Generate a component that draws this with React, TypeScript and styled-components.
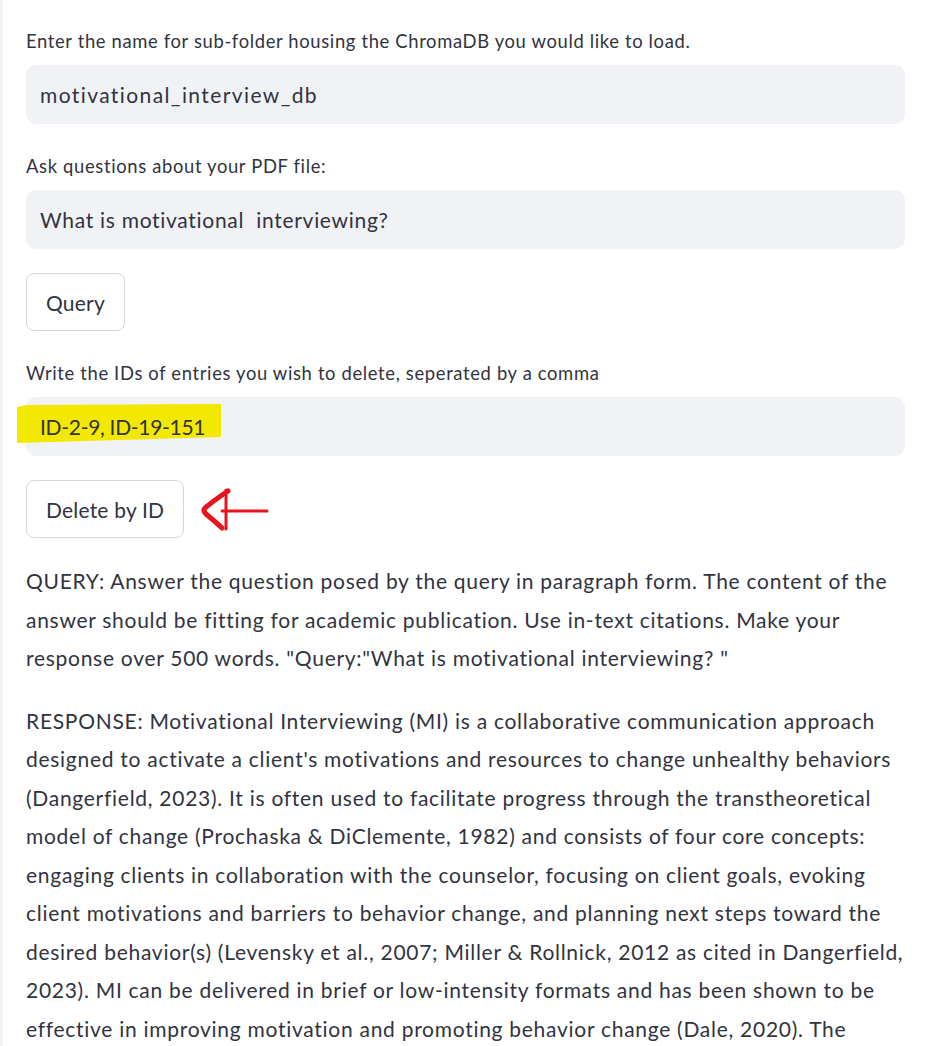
import React from "react";
import styled, { createGlobalStyle } from "styled-components";

const Global = createGlobalStyle`
  html, body { margin: 0; padding: 0; background: #ffffff; }
  body { font-family: "Lato", "Liberation Sans", sans-serif; color: #31333f; }
  * { box-sizing: border-box; }
`;

const Page = styled.div`
  display: flex;
  min-height: 1046px;
`;

const SideEdge = styled.div`
  width: 3px;
  flex: none;
  background: #f0f2f6;
`;

const Main = styled.main`
  flex: 1;
  display: flex;
  flex-direction: column;
  gap: 24px;
  padding: 23px 21px 0 23px;
`;

const Field = styled.div`
  display: flex;
  flex-direction: column;
  gap: 12px;
  padding-top: 6px;
`;

const Label = styled.label`
  font-size: 18.4px;
  line-height: 24px;
  letter-spacing: 0.65px;
  color: #31333f;
`;

const InputWrap = styled.div`
  position: relative;
  height: 59px;
  border-radius: 10px;
  background: #f0f2f6;
`;

const TextInput = styled.input<{ $spacing?: number }>`
  position: relative;
  z-index: 1;
  width: 100%;
  height: 100%;
  border: none;
  outline: none;
  background: transparent;
  padding: 0 14px;
  font-family: inherit;
  font-size: 21px;
  letter-spacing: ${(p) => p.$spacing ?? 0.6}px;
  color: #31333f;
  white-space: pre;
`;

const Highlight = styled.div`
  position: absolute;
  left: -9px;
  top: 7px;
  width: 204px;
  height: 40px;
  background: #f2e800;
  clip-path: polygon(0 3px, 10px 1px, 100% 0, 100% 33px, 0 39px);
  pointer-events: none;
`;

const ButtonRow = styled.div`
  display: flex;
  align-items: center;
  gap: 14px;
`;

const Button = styled.button`
  height: 58px;
  padding: 0 19px;
  border: 1px solid #d6d6dc;
  border-radius: 8px;
  background: #ffffff;
  font-family: inherit;
  font-size: 21px;
  letter-spacing: 0.2px;
  color: #31333f;
  cursor: pointer;
`;

const Paragraph = styled.p`
  margin: 0;
  font-size: 21px;
  line-height: 38.5px;
  letter-spacing: 0.72px;
  color: #31333f;
  white-space: nowrap;
`;

const RedArrow = () => (
  <svg width="72" height="46" viewBox="0 0 72 46" fill="none">
    <path
      d="M30 5 C24 9 14 16 7 22 C5 24 6 26 8 28 C14 33 20 38 24 42"
      stroke="#e8141c"
      strokeWidth="5"
      strokeLinecap="round"
      strokeLinejoin="round"
    />
    <path d="M28 4 L28 43" stroke="#e8141c" strokeWidth="3" strokeLinecap="round" />
    <path d="M24 25 L69 25" stroke="#e8141c" strokeWidth="3" strokeLinecap="round" />
  </svg>
);

const p1 = [
  "QUERY: Answer the question posed by the query in paragraph form. The content of the",
  "answer should be fitting for academic publication. Use in-text citations. Make your",
  'response over 500 words. "Query:"What is motivational interviewing? "',
];

const p2 = [
  "RESPONSE: Motivational Interviewing (MI) is a collaborative communication approach",
  "designed to activate a client's motivations and resources to change unhealthy behaviors",
  "(Dangerfield, 2023). It is often used to facilitate progress through the transtheoretical",
  "model of change (Prochaska & DiClemente, 1982) and consists of four core concepts:",
  "engaging clients in collaboration with the counselor, focusing on client goals, evoking",
  "client motivations and barriers to behavior change, and planning next steps toward the",
  "desired behavior(s) (Levensky et al., 2007; Miller & Rollnick, 2012 as cited in Dangerfield,",
  "2023). MI can be delivered in brief or low-intensity formats and has been shown to be",
  "effective in improving motivation and promoting behavior change (Dale, 2020). The",
];

const Lines = ({ lines }: { lines: string[] }) => (
  <>
    {lines.map((l, i) => (
      <React.Fragment key={i}>
        {l}
        {i < lines.length - 1 && <br />}
      </React.Fragment>
    ))}
  </>
);

export default function App() {
  return (
    <>
      <Global />
      <Page>
        <SideEdge />
        <Main>
          <Field>
            <Label>Enter the name for sub-folder housing the ChromaDB you would like to load.</Label>
            <InputWrap>
              <TextInput readOnly $spacing={1.4} value="motivational_interview_db" />
            </InputWrap>
          </Field>
          <Field>
            <Label>Ask questions about your PDF file:</Label>
            <InputWrap>
              <TextInput readOnly $spacing={0.7} value="What is motivational  interviewing?" />
            </InputWrap>
          </Field>
          <ButtonRow>
            <Button>Query</Button>
          </ButtonRow>
          <Field>
            <Label>Write the IDs of entries you wish to delete, seperated by a comma</Label>
            <InputWrap>
              <Highlight />
              <TextInput readOnly $spacing={-0.3} value="ID-2-9, ID-19-151" />
            </InputWrap>
          </Field>
          <ButtonRow>
            <Button>Delete by ID</Button>
            <RedArrow />
          </ButtonRow>
          <Paragraph>
            <Lines lines={p1} />
          </Paragraph>
          <Paragraph>
            <Lines lines={p2} />
          </Paragraph>
        </Main>
      </Page>
    </>
  );
}
